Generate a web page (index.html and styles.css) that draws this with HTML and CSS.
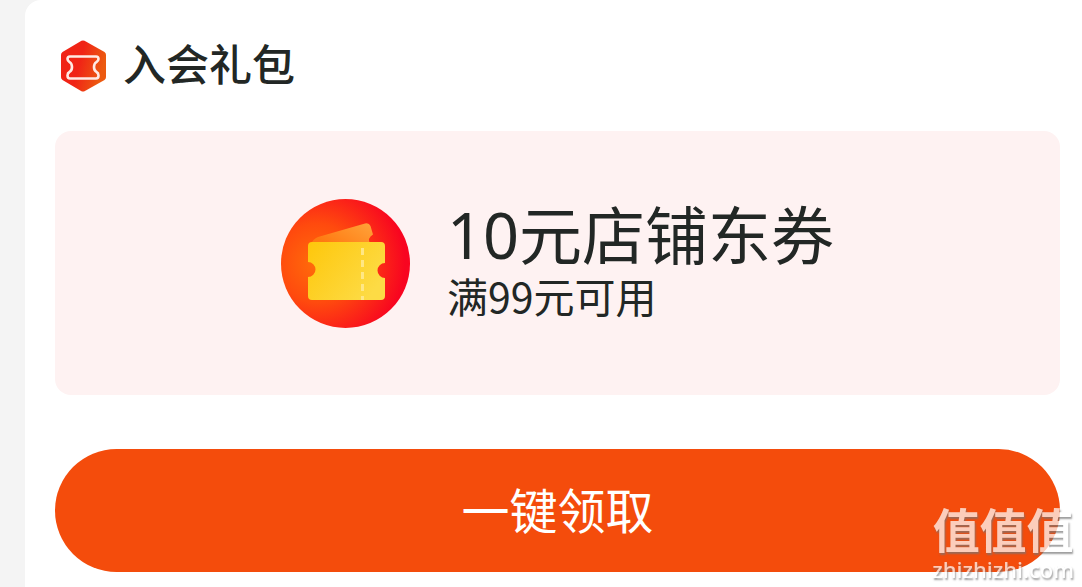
FILE: index.html
```html
<!DOCTYPE html>
<html lang="zh-CN">
<head>
<meta charset="utf-8">
<meta name="viewport" content="width=device-width, initial-scale=1">
<title>入会礼包</title>
<link rel="stylesheet" href="styles.css">
</head>
<body>
<main class="panel">
  <header class="panel-header">
    <svg class="gift-icon" viewBox="0 0 48 52" aria-hidden="true">
      <defs>
        <linearGradient id="hex" x1="0" y1="0" x2="1" y2="0.3">
          <stop offset="0.5" stop-color="#f02416"/>
          <stop offset="1" stop-color="#ec5a10"/>
        </linearGradient>
      </defs>
      <path d="M22.500 .8Q24 0 25.500 .8L45.500 12Q47 13 47 15V37Q47 39 45.500 40L25.500 51.200Q24 52 22.500 51.200L3.500 40Q2 39 2 37V15Q2 13 3.500 12Z" fill="url(#hex)"/>
      <path d="M11 16.500H37Q39.500 16.500 39.500 19Q39.500 21 37.500 22Q35 23.500 35 27Q35 30.500 37.500 32Q39.500 33 39.500 35.500Q39.500 38.500 37 38.500H11Q8.500 38.500 8.500 35.500Q8.500 33 10.500 32Q13 30.500 13 27Q13 23.500 10.500 22Q8.500 21 8.500 19Q8.500 16.500 11 16.500Z" fill="none" stroke="#ffeae4" stroke-width="2.600" stroke-linejoin="round"/>
    </svg>
    <h1 class="panel-title">入会礼包</h1>
  </header>
  <section class="coupon">
    <svg class="coupon-icon" viewBox="0 0 130 130" aria-hidden="true">
      <defs>
        <radialGradient id="disc" gradientUnits="userSpaceOnUse" cx="36" cy="65" r="88">
          <stop offset="0" stop-color="#ff6d0a"/>
          <stop offset="0.450" stop-color="#ff4a0e"/>
          <stop offset="1" stop-color="#f80520"/>
        </radialGradient>
        <linearGradient id="front" x1="0" y1="0" x2="1" y2="0.6">
          <stop offset="0" stop-color="#fec70b"/>
          <stop offset="1" stop-color="#fddb45"/>
        </linearGradient>
        <linearGradient id="back" x1="0" y1="0.5" x2="1" y2="0">
          <stop offset="0" stop-color="#ff7a12"/>
          <stop offset="1" stop-color="#ffa33a"/>
        </linearGradient>
      </defs>
      <circle cx="64.500" cy="65.500" r="64.500" fill="url(#disc)"/>
      <path d="M30 46Q32 41 37 39L84 25.500Q88 24.500 89.500 28L92 36.500Q86 40 89 45.500H30Z" fill="url(#back)"/>
      <path d="M31 44H100Q104 44 104 48V65A7.500 7.500 0 0 0 104 80V98Q104 102 100 102H31Q27 102 27 98V79A7.500 7.500 0 0 0 27 64V48Q27 44 31 44Z" fill="url(#front)"/>
      <path d="M81.500 50V102" stroke="#ffe785" stroke-width="3" stroke-dasharray="7 5"/>
    </svg>
    <div class="coupon-text">
      <h2 class="coupon-name">10元店铺东券</h2>
      <p class="coupon-rule">满99元可用</p>
    </div>
  </section>
  <button class="claim" type="button">一键领取</button>
</main>
<div class="watermark">
  <span class="watermark-name">值值值</span>
  <span class="watermark-site">zhizhizhi.com</span>
</div>
</body>
</html>
```
FILE: styles.css
```css
* {
  box-sizing: border-box;
}

body {
  margin: 0;
  background: #f4f4f4;
  color: #222725;
  font-family: "Noto Sans", "Noto Sans CJK SC", sans-serif;
}

.panel {
  min-height: 100vh;
  margin-left: 25px;
  padding: 0 22px 15px 30px;
  border-radius: 16px 0 0 0;
  background: #fff;
}

.panel-header {
  display: flex;
  align-items: center;
  gap: 16px;
  height: 131px;
  padding-left: 4px;
}

.gift-icon {
  width: 48px;
  height: 52px;
}

.panel-title,
.coupon-name,
.coupon-rule {
  margin: 0;
  font-weight: 400;
  white-space: nowrap;
}

.panel-title {
  padding-bottom: 2px;
  font-size: 43px;
  line-height: 56px;
  font-weight: 500;
}

.coupon {
  display: flex;
  align-items: center;
  justify-content: center;
  gap: 36px;
  min-height: 264px;
  border-radius: 16px;
  background: #fef2f2;
}

.coupon-icon {
  flex: none;
  width: 130px;
  height: 130px;
}

.coupon-text {
  padding-bottom: 8px;
}

.coupon-name {
  font-size: 63px;
  line-height: 72px;
}

.coupon-rule {
  font-family: "Noto Sans CJK SC", sans-serif;
  font-size: 41px;
  line-height: 48px;
}

.claim {
  display: block;
  width: 100%;
  height: 123px;
  margin-top: 54px;
  padding: 0;
  border: 0;
  border-radius: 62px;
  background: #f44c0c;
  color: #fff;
  font: inherit;
  font-size: 48px;
  line-height: 72px;
  cursor: pointer;
}

.watermark {
  position: fixed;
  right: 8px;
  bottom: 5px;
  display: flex;
  flex-direction: column;
  align-items: center;
  color: #fff;
  opacity: 0.72;
  text-shadow: 1px 2px 2px #777;
  pointer-events: none;
}

.watermark-name {
  font-size: 47px;
  line-height: 52px;
  font-weight: 700;
}

.watermark-site {
  font-size: 22px;
  line-height: 26px;
  font-weight: 500;
}
```
